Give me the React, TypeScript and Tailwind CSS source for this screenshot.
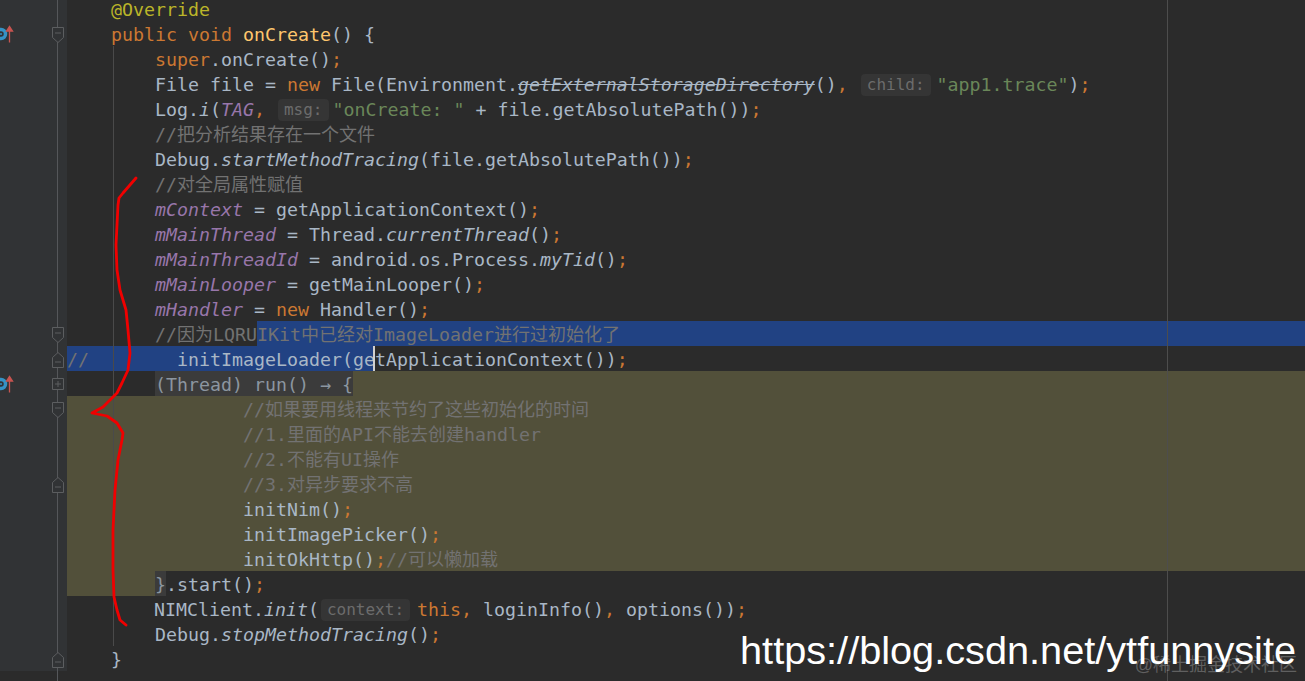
import React from "react";

type Fold = "down" | "up" | "plus";

const K = ({ children }: { children: React.ReactNode }) => <span className="text-[#cc7832]">{children}</span>;
const F = ({ children }: { children: React.ReactNode }) => <span className="italic text-[#9876aa]">{children}</span>;
const I = ({ children }: { children: React.ReactNode }) => <span className="italic">{children}</span>;
const S = ({ children }: { children: React.ReactNode }) => <span className="text-[#6a8759]">{children}</span>;
const C = ({ children }: { children: React.ReactNode }) => <span className="text-[#727272]">{children}</span>;
const Zh = ({ children }: { children: React.ReactNode }) => <span className="text-[18px]">{children}</span>;

function Hint({ children, className }: { children: string; className: string }) {
  return (
    <span className={`inline-block h-[22px] rounded-[4px] bg-[#353535] px-[6px] align-[1px] text-[16px] leading-[22px] text-[#6c6c6c] ${className}`}>
      {children}
    </span>
  );
}

function ImplementsIcon() {
  return (
    <svg width="14" height="18" viewBox="0 0 14 18">
      <circle cx="1" cy="9" r="4.5" fill="none" stroke="#3592c4" strokeWidth="3.5" />
      <circle cx="1" cy="9" r="1" fill="#3592c4" />
      <path d="M9.5 17.5V1.5M6.5 6l3-4.5 3 4.5z" fill="#c75450" stroke="#c75450" strokeWidth="1.3" />
    </svg>
  );
}

function FoldMark({ kind }: { kind: Fold }) {
  const stroke = "#5c5e60";
  if (kind === "plus") {
    return (
      <svg width="12" height="12" viewBox="0 0 12 12" className="relative z-10">
        <path d="M.5.5h11v11H.5z" fill="#313335" stroke={stroke} />
        <path d="M3 6h6M6 3v6" stroke={stroke} />
      </svg>
    );
  }
  return (
    <svg width="12" height="16" viewBox="0 0 12 16" className="relative z-10 mt-[3px]">
      <path
        d={kind === "down" ? "M.5.5h11v10L6 15.5.5 10.5z" : "M.5 15.5h11v-10L6 .5.5 5.5z"}
        fill="#313335"
        stroke={stroke}
      />
      <path d={kind === "down" ? "M3 6h6" : "M3 10h6"} stroke={stroke} />
    </svg>
  );
}

function Row({ fold, icon, children }: { fold?: Fold; icon?: boolean; children: React.ReactNode }) {
  return (
    <div className="flex h-[25px]">
      <div className="flex h-full w-[67px] shrink-0 items-center bg-[#313335]">
        <div className="w-[52px] shrink-0">{icon && <ImplementsIcon />}</div>
        {fold && <FoldMark kind={fold} />}
      </div>
      <div className="flex h-full min-w-0 flex-1 whitespace-pre leading-[27px]">{children}</div>
    </div>
  );
}

function RedScribble() {
  return (
    <svg width="1305" height="681" viewBox="0 0 1305 681" className="pointer-events-none absolute left-0 top-0 z-20">
      <path
        d="M136 178L123 193L119 198L118 205L117 225L116 245L117 270L120 290L126 310L128 330L130 353L128 370L122 383L117 393L103 407L92 413L107 416L117 423L123 433L122 440L118 460L115 490L113 530L113 570L114 597L117 610L120 620L126 625"
        fill="none"
        stroke="#f00000"
        strokeWidth="2.8"
        strokeLinejoin="round"
        strokeLinecap="round"
      />
    </svg>
  );
}

export default function App() {
  return (
    <div className="relative h-[681px] w-[1305px] overflow-hidden bg-[#2b2b2b] font-['DejaVu_Sans_Mono','Noto_Sans_CJK_SC',monospace] text-[18.27px] text-[#a9b7c6]">
      <div className="-mt-1">
        <Row><span className="text-[#bbb529]">{"    @Override"}</span></Row>
        <Row fold="down" icon>
          <span>{"    "}<K>public void </K><span className="text-[#ffc66d]">onCreate</span>{"() {"}</span>
        </Row>
        <Row><span>{"        "}<K>super</K>.onCreate()<K>;</K></span></Row>
        <Row>
          <span>
            {"        File file = "}<K>new </K>File(Environment.
            <span className="italic line-through">getExternalStorageDirectory</span>()<K>,</K>{" "}
            <Hint className="ml-[2px] mr-[6px]">child:</Hint><S>"app1.trace"</S>)<K>;</K>
          </span>
        </Row>
        <Row>
          <span>
            {"        Log."}<I>i</I>(<F>TAG</F><K>,</K>{" "}
            <Hint className="ml-[2px] mr-[4px]">msg:</Hint><S>"onCreate: "</S>{" + file.getAbsolutePath())"}<K>;</K>
          </span>
        </Row>
        <Row><C>{"        //"}<Zh>把分析结果存在一个文件</Zh></C></Row>
        <Row><span>{"        Debug."}<I>startMethodTracing</I>(file.getAbsolutePath())<K>;</K></span></Row>
        <Row><C>{"        //"}<Zh>对全局属性赋值</Zh></C></Row>
        <Row><span>{"        "}<F>mContext</F>{" = getApplicationContext()"}<K>;</K></span></Row>
        <Row><span>{"        "}<F>mMainThread</F>{" = Thread."}<I>currentThread</I>()<K>;</K></span></Row>
        <Row><span>{"        "}<F>mMainThreadId</F>{" = android.os.Process."}<I>myTid</I>()<K>;</K></span></Row>
        <Row><span>{"        "}<F>mMainLooper</F>{" = getMainLooper()"}<K>;</K></span></Row>
        <Row><span>{"        "}<F>mHandler</F>{" = "}<K>new </K>Handler()<K>;</K></span></Row>
        <Row fold="down">
          <C>{"        //"}<Zh>因为</Zh>LQRU</C>
          <span className="flex-1 bg-[#214283] text-[#727272]">IKit<Zh>中已经对</Zh>ImageLoader<Zh>进行过初始化了</Zh></span>
        </Row>
        <Row fold="up">
          <span className="bg-[#214283]"><C>{"//"}</C>{"        initImageLoader(ge"}</span>
          <span className="-ml-[2px] h-full w-[2px] bg-[#d0d0d0]" />
          <span>tApplicationContext())<K>;</K></span>
        </Row>
        <Row fold="plus" icon>
          <span>{"        "}</span>
          <span className="bg-[#3b3b3b] text-[#8c96a0]">{"(Thread) run() → {"}</span>
          <span className="flex-1 bg-[#52503a]" />
        </Row>
        <Row fold="down"><span className="flex-1 bg-[#52503a]"><C>{"                //"}<Zh>如果要用线程来节约了这些初始化的时间</Zh></C></span></Row>
        <Row><span className="flex-1 bg-[#52503a]"><C>{"                //1."}<Zh>里面的</Zh>API<Zh>不能去创建</Zh>handler</C></span></Row>
        <Row><span className="flex-1 bg-[#52503a]"><C>{"                //2."}<Zh>不能有</Zh>UI<Zh>操作</Zh></C></span></Row>
        <Row fold="up"><span className="flex-1 bg-[#52503a]"><C>{"                //3."}<Zh>对异步要求不高</Zh></C></span></Row>
        <Row><span className="flex-1 bg-[#52503a]">{"                initNim()"}<K>;</K></span></Row>
        <Row><span className="flex-1 bg-[#52503a]">{"                initImagePicker()"}<K>;</K></span></Row>
        <Row>
          <span className="flex-1 bg-[#52503a]">
            {"                initOkHttp()"}<K>;</K><C>//<Zh>可以懒加载</Zh></C>
          </span>
        </Row>
        <Row>
          <span className="bg-[#52503a]">{"        "}</span>
          <span className="bg-[#3b3b3b] text-[#8c96a0]">{"}"}</span>
          <span>.start()<K>;</K></span>
        </Row>
        <Row>
          <span className="-ml-px">
            {"        NIMClient."}<I>init</I>(
            <Hint className="ml-[2px] mr-[7px]">context:</Hint><K>this, </K>{"loginInfo()"}<K>, </K>options())<K>;</K>
          </span>
        </Row>
        <Row><span>{"        Debug."}<I>stopMethodTracing</I>()<K>;</K></span></Row>
        <Row fold="up"><span>{"    }"}</span></Row>
      </div>

      {/* guide lines */}
      <div className="absolute bottom-0 left-[57px] top-0 w-px bg-[#55575a]" />
      <div className="absolute left-[113px] top-[46px] h-[600px] w-px bg-[#4a4a4a]" />
      <div className="absolute bottom-0 left-[1167px] top-0 w-px bg-[#4d4d4d]" />

      <RedScribble />

      {/* watermarks */}
      <div className="absolute right-[9px] top-[628px] z-30 font-['Liberation_Sans',sans-serif] text-[39.7px] leading-[44px] text-white">
        https://blog.csdn.net/ytfunnysite
      </div>
      <div className="absolute right-[8px] top-[654px] z-30 font-['Liberation_Sans','Noto_Sans_CJK_SC',sans-serif] text-[18px] leading-[22px] text-white/25">
        @稀土掘金技术社区
      </div>
    </div>
  );
}
